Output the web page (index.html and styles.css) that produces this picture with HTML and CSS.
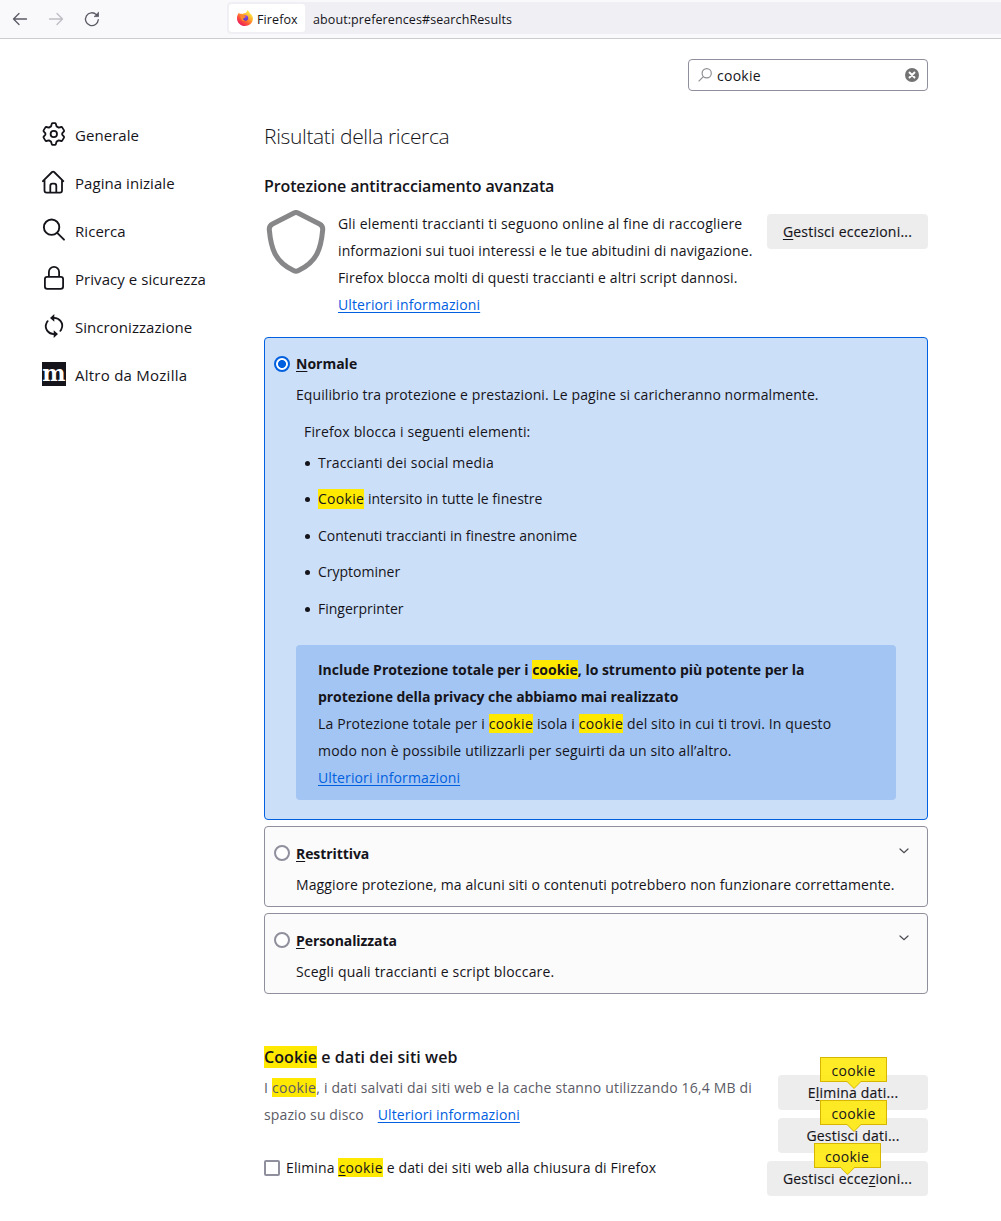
FILE: index.html
```html
<!DOCTYPE html>
<html lang="it">
<head>
<meta charset="utf-8">
<title>Impostazioni</title>
<link rel="stylesheet" href="styles.css">
</head>
<body>
<header class="toolbar">
  <nav class="nav-buttons">
    <svg width="16" height="16" viewBox="0 0 16 16" fill="none" stroke="#5b5b66" stroke-width="1.3" stroke-linecap="round" stroke-linejoin="round"><path d="M14.5 8H1.5M7 2.5L1.5 8L7 13.5"/></svg>
    <svg width="16" height="16" viewBox="0 0 16 16" fill="none" stroke="#bdbdc3" stroke-width="1.3" stroke-linecap="round" stroke-linejoin="round"><path d="M1.5 8H14.5M9 2.5L14.5 8L9 13.5"/></svg>
    <svg width="16" height="16" viewBox="0 0 16 16" fill="none" stroke="#5b5b66" stroke-width="1.3" stroke-linecap="round"><path d="M14.3 8.6A6.4 6.4 0 1 1 12.4 3.6"/><path d="M14.5 1.6V5.6H10.5Z" fill="#5b5b66" stroke-width=".8" stroke-linejoin="round"/></svg>
  </nav>
  <div class="urlbar">
    <div class="identity">
      <svg width="16" height="16" viewBox="0 0 16 16">
        <defs>
          <linearGradient id="fox" x1=".85" y1=".1" x2=".2" y2=".95"><stop offset="0" stop-color="#fff44f"/><stop offset=".35" stop-color="#ffb02e"/><stop offset=".65" stop-color="#ff5a36"/><stop offset="1" stop-color="#e9155f"/></linearGradient>
          <linearGradient id="globe" x1=".5" y1="0" x2=".5" y2="1"><stop offset="0" stop-color="#a048e8"/><stop offset="1" stop-color="#4b3cc4"/></linearGradient>
        </defs>
        <path d="M10.3 0C12 1.2 12.6 2.5 13 3.4C14.9 4.4 16 6.6 15.9 8.8C15.7 13 12.3 16 8 16C3.6 16 0 12.7 0 8.2C0 5.7.9 3.9 2.1 2.5L2.8 4.1C3.6 3.6 4.6 3.5 5.5 3.9C6.7 3 8.1 3.2 8.8 3C9.4 2.1 10.2 1.3 10.3 0Z" fill="url(#fox)"/>
        <circle cx="8.4" cy="8" r="2.8" fill="url(#globe)"/>
        <path d="M3.2 5.2C5 4.3 6.8 4.8 7.6 6.2C8.3 6.4 8.9 6.4 9 6.7C8.4 7.7 7.1 7.5 6.3 8.4C5.8 9.5 6.8 10.6 8.3 10.6C6.2 12.1 3.3 9.8 3.2 5.2Z" fill="#ff8a2b"/>
      </svg>
      <span>Firefox</span>
    </div>
    <span class="address">about:preferences#searchResults</span>
  </div>
</header>

<div class="page">
  <aside class="sidebar">
    <div class="category">
      <svg width="24" height="24" viewBox="0 0 24 24" fill="none" stroke="#15141a" stroke-width="1.8" stroke-linejoin="round"><path d="M10.6 1.2H13Q13.6 1.2 13.8 1.8L14.6 4.4L16.7 5.6L19.3 5Q19.9 4.9 20.2 5.4L22 8.4Q22.3 8.9 21.9 9.4L20.2 11.3V12.7L21.9 14.6Q22.3 15.1 22 15.6L20.2 18.6Q19.9 19.1 19.3 19L16.7 18.4L14.6 19.6L13.8 22.2Q13.6 22.8 13 22.8H10.6Q10 22.8 9.8 22.2L9 19.6L6.9 18.4L4.3 19Q3.7 19.1 3.4 18.6L1.6 15.6Q1.3 15.1 1.7 14.6L3.4 12.7V11.3L1.7 9.4Q1.3 8.9 1.6 8.4L3.4 5.4Q3.7 4.9 4.3 5L6.9 5.6L9 4.4L9.8 1.8Q10 1.2 10.6 1.2Z"/><circle cx="11.8" cy="12" r="3.2"/></svg>
      <span>Generale</span>
    </div>
    <div class="category">
      <svg width="24" height="24" viewBox="0 0 24 24" fill="none" stroke="#15141a" stroke-width="1.8" stroke-linejoin="round" stroke-linecap="round"><path d="M.9 11.2L10.1 2Q11.1 1.2 12.1 2L21.3 11.2M2.5 10V20.5Q2.5 22.6 4.6 22.6H18Q20 22.6 20 20.5V10M8.3 22.4V16Q8.3 13.6 10.3 13.6H12.2Q14.3 13.6 14.3 16V22.4"/></svg>
      <span>Pagina iniziale</span>
    </div>
    <div class="category">
      <svg width="24" height="24" viewBox="0 0 24 24" fill="none" stroke="#15141a" stroke-width="1.9" stroke-linecap="round"><circle cx="9.6" cy="9.2" r="7.7"/><path d="M15.2 14.9L22 21.7"/></svg>
      <span>Ricerca</span>
    </div>
    <div class="category">
      <svg width="24" height="24" viewBox="0 0 24 24" fill="none" stroke="#15141a" stroke-width="1.8"><rect x="2.9" y="10.9" width="18.2" height="12" rx="2.3"/><path d="M6.9 10.8V6A5.1 5.1 0 0 1 17.1 6V10.8"/></svg>
      <span>Privacy e sicurezza</span>
    </div>
    <div class="category">
      <svg width="24" height="24" viewBox="0 0 24 24" fill="none" stroke="#15141a" stroke-width="1.8" stroke-linecap="round"><path d="M10.8 4C17.4 3.2 22.3 9.4 19.3 15.3Q18.9 16.2 18.3 16.8M5.7 7.2Q5.1 7.8 4.7 8.7C1.7 14.6 6.6 20.8 13.2 20"/><path d="M12.3 0V7.7L8 4ZM11.7 16.3V24L16 20Z" fill="#15141a" stroke="none"/></svg>
      <span>Sincronizzazione</span>
    </div>
    <div class="category">
      <span class="moz">m</span>
      <span class="s6">Altro da Mozilla</span>
    </div>
  </aside>

  <main class="content">
    <div class="search">
      <svg width="14" height="14" viewBox="0 0 14 14" fill="none" stroke="#8f8f94" stroke-width="1.2"><circle cx="8.7" cy="5.2" r="4.6"/><path d="M5.4 8.6L.6 13.4"/></svg>
      <span class="search-value">cookie</span>
      <svg width="14" height="14" viewBox="0 0 14 14"><circle cx="7" cy="7" r="7" fill="#737373"/><path d="M4.5 4.5L9.5 9.5M9.5 4.5L4.5 9.5" stroke="#fff" stroke-width="1.9" stroke-linecap="round"/></svg>
    </div>

    <h1>Risultati della ricerca</h1>
    <h2 class="t-h2a">Protezione antitracciamento avanzata</h2>

    <section class="intro">
      <svg width="64" height="64" viewBox="0 0 64 64" fill="none" stroke="#87878a" stroke-width="5" stroke-linejoin="round"><path d="M30 3Q32 2 34 3L55.500 14Q59 15.800 58.700 19.800C57 39 53 51.500 34.500 60.600Q32 61.800 29.500 60.600C11 51.500 7 39 5.300 19.800Q5 15.800 8.500 14Z"/></svg>
      <p class="copy">
        <span class="line i1">Gli elementi traccianti ti seguono online al fine di raccogliere</span>
        <span class="line i2">informazioni sui tuoi interessi e le tue abitudini di navigazione.</span>
        <span class="line i3">Firefox blocca molti di questi traccianti e altri script dannosi.</span>
        <a class="line">Ulteriori informazioni</a>
      </p>
      <div class="button wide"><span><u>G</u>estisci eccezioni...</span></div>
    </section>

    <section class="option selected">
      <div class="option-head"><i class="radio on"></i><b><u>N</u>ormale</b></div>
      <p class="desc d1">Equilibrio tra protezione e prestazioni. Le pagine si caricheranno normalmente.</p>
      <p class="blocks">Firefox blocca i seguenti elementi:</p>
      <ul>
        <li class="l1">Traccianti dei social media</li>
        <li class="l2"><mark>Cookie</mark> intersito in tutte le finestre</li>
        <li>Contenuti traccianti in finestre anonime</li>
        <li>Cryptominer</li>
        <li>Fingerprinter</li>
      </ul>
      <div class="callout">
        <b class="line c1">Include Protezione totale per i <mark>cookie</mark>, lo strumento più potente per la</b>
        <b class="line c2">protezione della privacy che abbiamo mai realizzato</b>
        <span class="line c3">La Protezione totale per i <mark>cookie</mark> isola i <mark>cookie</mark> del sito in cui ti trovi. In questo</span>
        <span class="line c4">modo non è possibile utilizzarli per seguirti da un sito all’altro.</span>
        <a class="line">Ulteriori informazioni</a>
      </div>
    </section>

    <section class="option closed">
      <div class="option-head"><i class="radio"></i><b><u>R</u>estrittiva</b>
        <svg class="chevron" width="10" height="6" viewBox="0 0 10 6" fill="none" stroke="#4a4a50" stroke-width="1.2" stroke-linecap="round"><path d="M1 1L5 4.7L9 1"/></svg></div>
      <p class="desc d2">Maggiore protezione, ma alcuni siti o contenuti potrebbero non funzionare correttamente.</p>
    </section>
    <section class="option closed">
      <div class="option-head"><i class="radio"></i><b><u>P</u>ersonalizzata</b>
        <svg class="chevron" width="10" height="6" viewBox="0 0 10 6" fill="none" stroke="#4a4a50" stroke-width="1.2" stroke-linecap="round"><path d="M1 1L5 4.7L9 1"/></svg></div>
      <p class="desc d3">Scegli quali traccianti e script bloccare.</p>
    </section>

    <section class="site-data">
      <div class="data-copy">
        <h2 class="t-h2b"><mark>Cookie</mark> e dati dei siti web</h2>
        <p class="usage">
          <span class="line u1">I <mark>cookie</mark>, i dati salvati dai siti web e la cache stanno utilizzando 16,4 MB di</span>
          <span class="line u2">spazio su disco <a class="more">Ulteriori informazioni</a></span>
        </p>
        <div class="check-row"><i class="checkbox"></i><span class="k1">Elimina <mark><u>c</u>ookie</mark> e dati dei siti web alla chiusura di Firefox</span></div>
      </div>
      <div class="data-buttons">
        <div class="button"><span>E<u>l</u>imina dati...</span><em class="tip">cookie</em></div>
        <div class="button"><span>Gestisci <u>d</u>ati...</span><em class="tip">cookie</em></div>
        <div class="button wide"><span>Gestisci ecce<u>z</u>ioni...</span><em class="tip">cookie</em></div>
      </div>
    </section>
  </main>
</div>
</body>
</html>
```
FILE: styles.css
```css
* { box-sizing: border-box; }
body {
  margin: 0;
  height: 1221px;
  background: #fff;
  color: #15141a;
  font: 14px/27px "Open Sans", "Noto Sans", sans-serif;
  overflow: hidden;
}
h1, h2, p, ul { margin: 0; padding: 0; }
svg { flex: none; display: block; }

.toolbar {
  display: flex;
  height: 39px;
  background: #f9f9fb;
  border-bottom: 1px solid #ccccd0;
}
.nav-buttons {
  display: flex;
  gap: 20px;
  width: 227px;
  padding: 11px 0 0 12px;
}
.urlbar {
  display: flex;
  flex: 1;
  align-items: center;
  height: 32px;
  margin-top: 2px;
  padding-left: 2px;
  background: #f0f0f4;
  border-radius: 4px 0 0 4px;
  font-size: 12.5px;
  line-height: 28px;
  letter-spacing: .1px;
}
.urlbar span { padding-top: 3px; }
.identity {
  display: flex;
  align-items: center;
  gap: 4px;
  width: 76px;
  height: 28px;
  padding-left: 8px;
  background: #fff;
  border-radius: 3px;
}
.address { margin-left: 8px; }

.page { display: flex; }
.sidebar {
  width: 264px;
  padding: 71px 0 0 42px;
}
.category {
  display: flex;
  align-items: center;
  gap: 9px;
  height: 48px;
  font-size: 15px;
  letter-spacing: .05px;
}
.category span:last-child { padding-top: 2px; }
.category svg, .moz { margin-top: -1px; }
.moz {
  width: 24px;
  height: 24px;
  background: #15141a;
  color: #fff;
  font: bold 22px/22px "DejaVu Serif", serif;
  text-align: center;
}

.content { width: 664px; padding-top: 20px; }
.search {
  display: flex;
  align-items: center;
  width: 240px;
  height: 32px;
  margin-left: auto;
  padding: 0 8px 0 9px;
  border: 1px solid #8f8f9d;
  border-radius: 4px;
}
.search-value { flex: 1; margin-left: 5px; letter-spacing: .25px; }
h1 {
  margin-top: 30px;
  font-size: 21px;
  font-weight: 300;
  line-height: 30px;
  letter-spacing: -.35px;
}
h2 { font-size: 16px; font-weight: 600; line-height: 24px; }
.t-h2a { margin-top: 23px; letter-spacing: -.12px; }
.t-h2b { letter-spacing: .08px; }

.line { display: block; white-space: nowrap; }
a { color: #0060df; text-decoration: underline; text-underline-offset: 2px; letter-spacing: .12px; }
u { text-underline-offset: 2px; }
mark { background: #ffe900; color: inherit; }

/* tracking per line of copy */
.s6 { letter-spacing: .25px; }
.i1 { letter-spacing: .19px; }
.i2 { letter-spacing: .125px; }
.i3 { letter-spacing: .135px; }
.d1 { letter-spacing: .09px; }
.d2 { letter-spacing: .105px; }
.d3 { letter-spacing: .19px; }
.l1 { letter-spacing: .17px; }
.l2 { letter-spacing: .03px; }
.l2 mark { letter-spacing: .3px; }
.c1 { letter-spacing: -.02px; }
.c2 { letter-spacing: -.06px; }
.c3 { letter-spacing: .14px; }
.c3 mark { letter-spacing: .35px; }
.c4 { letter-spacing: .165px; }
.u1 { letter-spacing: .165px; }
.u1 mark { letter-spacing: .35px; }
.u2 { letter-spacing: .13px; }
.k1 { letter-spacing: .14px; }
.k1 mark { letter-spacing: .35px; }

.intro { display: flex; height: 127px; margin-top: 12px; }
.copy { width: 429px; margin-left: 10px; }
.button {
  position: relative;
  width: 150px;
  height: 35px;
  background: #ededee;
  border-radius: 4px;
  line-height: 35px;
  letter-spacing: .22px;
  text-align: center;
}
.button > span { -webkit-text-stroke: .15px #15141a; }
.button.wide { width: 161px; }
.intro .button { margin-top: 4px; }

.option {
  border: 1px solid #8f8f9d;
  border-radius: 4px;
  background: #fbfbfb;
}
.option b { letter-spacing: -.08px; }
.selected {
  height: 483px;
  padding-top: 11px;
  border-color: #0060df;
  background: #ccdff9;
}
.selected b { letter-spacing: 0; }
.selected b.c1 { letter-spacing: -.02px; }
.selected b.c2 { letter-spacing: -.06px; }
.closed { height: 81px; margin-top: 6px; padding-top: 12px; }
.option-head {
  display: flex;
  align-items: center;
  gap: 6px;
  height: 28px;
  padding-left: 9px;
}
.radio {
  width: 16px;
  height: 16px;
  border: 2px solid #8f8f9d;
  border-radius: 50%;
  background: #fff;
}
.radio.on {
  margin-top: 2px;
  border-color: #0060df;
  background: radial-gradient(circle, #0060df 3.6px, #fff 4.4px);
}
.chevron { margin: -5px 18px 0 auto; }
.desc { margin: 4px 0 0 31px; white-space: nowrap; }
.blocks { margin: 10px 0 0 39px; letter-spacing: .15px; }
ul { margin: 3.5px 0 0 53px; list-style: none; }
li {
  display: flex;
  align-items: center;
  height: 27px;
  margin-bottom: 9.5px;
  white-space: pre;
}
li mark { line-height: 20px; }
li::before {
  content: "";
  width: 5px;
  height: 5px;
  margin: 2px 8px 0 -13px;
  border-radius: 50%;
  background: #15141a;
}
.callout {
  width: 600px;
  height: 155px;
  margin: 23px 0 0 31px;
  padding: 11px 22px;
  background: #a3c5f3;
  border-radius: 4px;
}

.site-data { display: flex; margin-top: 51px; }
.data-copy { width: 503px; flex: none; }
.usage { margin-top: 5px; color: #5b5b66; }
.more { margin-left: 10px; }
.check-row { display: flex; align-items: center; gap: 6px; margin-top: 26px; white-space: nowrap; }
.checkbox { width: 16px; height: 16px; border: 2px solid #8f8f9d; border-radius: 2px; }
.data-buttons {
  display: flex;
  flex-direction: column;
  align-items: flex-end;
  gap: 8px;
  width: 161px;
  padding-top: 30px;
}
.tip {
  position: absolute;
  top: -18px;
  left: 50%;
  width: 67px;
  height: 25px;
  margin-left: -33px;
  border: 1px solid #d7b600;
  background: rgba(255, 233, 0, .85);
  font-style: normal;
  line-height: 25px;
  letter-spacing: .3px;
}
.button.wide .tip { margin-left: -34px; }
.tip::before, .tip::after {
  content: "";
  position: absolute;
  top: 24px;
  left: 26px;
  width: 14px;
  height: 7px;
  background: #d7b600;
  clip-path: polygon(0 0, 100% 0, 50% 100%);
}
.tip::after {
  top: 23px;
  background: #fdea26;
}
```
